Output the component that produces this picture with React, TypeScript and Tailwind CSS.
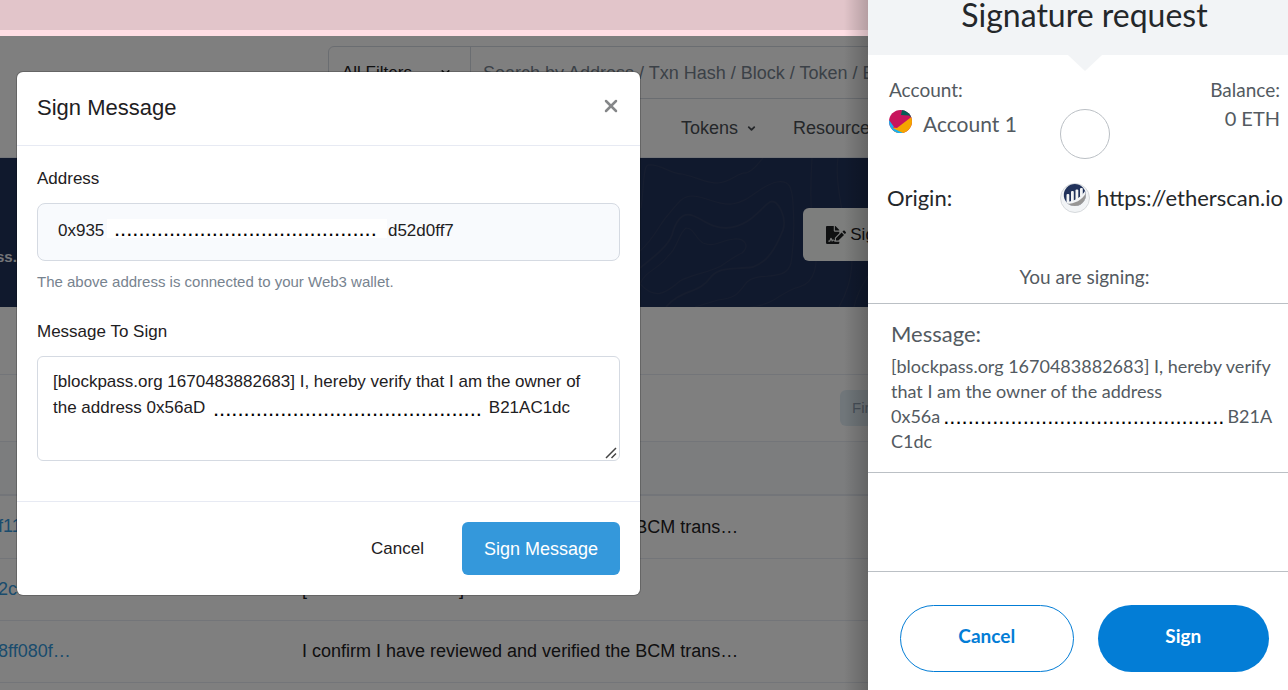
import React from "react";
import { FaFileSignature } from "react-icons/fa";
import { ChevronDown, X } from "lucide-react";

const figureSpaces = (n: number) => "\u2007".repeat(n);
const dots = (n: number) => ".".repeat(n);

const rows = [
  { hash: "f11", message: "I confirm I have reviewed and verified the BCM trans…" },
  { hash: "2c", message: null },
  { hash: "8ff080f…", message: "I confirm I have reviewed and verified the BCM trans…" },
];

function Contours() {
  return (
    <svg
      className="absolute inset-y-0 left-[640px] h-full w-[228px]"
      viewBox="0 0 228 149"
      fill="none"
      stroke="#2c3b5e"
      strokeWidth="1.2"
      aria-hidden="true"
    >
      <path d="M1 50C4 30 3 8 8 7C20 5 30 16 42 16C60 20 65 25 78 25C92 24 98 14 106 15C115 12 118 5 123 0" />
      <path d="M0 93C15 80 20 65 28 57C38 45 42 38 52 38C65 38 78 48 92 46C110 44 120 27 137 24C150 22 152 30 153 45C154 60 155 80 151 105C146 125 118 113 107 124C98 135 97 140 78 142L55 149" />
      <path strokeWidth="1.8" d="M0 110C15 98 28 88 32 77C36 62 42 55 51 57C62 60 70 70 86 70C110 69 120 50 130 44C138 40 147 60 143 72C135 92 127 104 113 109C92 112 80 108 70 120C60 135 40 132 26 149" />
      <path d="M0 126C15 142 25 136 40 123C52 116 68 115 81 108C90 102 95 98 102 95C110 88 105 80 94 81C80 82 76 90 63 85C55 80 54 70 46 70C38 76 38 90 28 98C18 112 6 112 0 126" />
      <path d="M172 0C170 30 171 60 173 82C180 105 175 125 159 129C140 134 135 147 110 149M198 0C195 20 201 45 205 70C215 95 215 120 199 149M228 118C220 130 216 140 214 149" />
    </svg>
  );
}

function ExplorerPage() {
  return (
    <div className="relative flex-1 bg-white text-[17px] leading-[26px] text-[#1e2022]">
      <header className="border-b border-[#e7eaf3]">
        <div className="pt-[10px] pl-[328px]">
          <form className="flex h-[53px] w-[660px] rounded-md border border-[#d5dae2]">
            <button type="button" className="flex w-[142px] items-center justify-between border-r border-[#d5dae2] pr-[18px] pl-[13px]">
              All Filters
              <ChevronDown size={13} strokeWidth={3} />
            </button>
            <input
              aria-label="Search"
              className="flex-1 bg-transparent pl-3 text-[18px] placeholder:text-[#77838f]"
              placeholder="Search by Address / Txn Hash / Block / Token / Ens"
            />
          </form>
        </div>
        <nav className="flex h-[58px] items-center gap-9 pl-[681px] text-[18px] text-[#4a4f55]">
          <a href="#tokens" className="flex items-center gap-2 no-underline">
            Tokens <ChevronDown size={11} strokeWidth={4} />
          </a>
          <a href="#resources">Resources</a>
        </nav>
      </header>

      <section className="relative flex h-[149px] items-center justify-between overflow-hidden bg-[#21325b]">
        <Contours />
        <p className="-ml-1 pt-12 text-[15px] font-bold text-[#e8ebf0]">ss.</p>
        <button
          type="button"
          className="relative -mr-[114px] mt-1 flex h-[53px] items-center gap-1 rounded-md bg-[#fafcfb] pr-6 pl-[23px] whitespace-nowrap"
        >
          <FaFileSignature size={20} />
          Sign Message
        </button>
      </section>

      <div className="h-[68px] border-b border-[#e7eaf3]" />
      <div className="flex h-[67px] items-center justify-end overflow-hidden border-b border-[#e7eaf3]">
        <button type="button" className="-mr-9 h-9 w-16 rounded-md bg-[#e1edf5] pl-3 text-left text-[15px] text-[#8fa1b3]">
          First
        </button>
      </div>
      <div className="h-[54px] border-b-2 border-[#e7eaf3] bg-[#f8fafd]" />
      <table className="w-full border-collapse">
        <tbody>
          {rows.map((r) => (
            <tr key={r.hash} className="h-[62px] border-b border-[#e7eaf3]">
              <td className="w-[302px]">
                <a href="#signature" className="-ml-0.5 text-[18px] text-[#3498db]">
                  {r.hash}
                </a>
              </td>
              <td className="text-[18px]">
                {r.message ?? (
                  <span className="flex w-[162px] justify-between">
                    <span>[</span>
                    <span>]</span>
                  </span>
                )}
              </td>
            </tr>
          ))}
        </tbody>
      </table>
      <div className="absolute inset-0 bg-black/50" />
    </div>
  );
}

function SignDialog() {
  return (
    <div
      role="dialog"
      aria-labelledby="sign-title"
      className="absolute top-[72px] left-[17px] w-[623px] rounded-md bg-white text-[17px] leading-[26px] text-[#1e2022] shadow-[0_0_0_1px_rgba(0,0,0,0.2)]"
    >
      <div className="flex h-[74px] items-center justify-between border-b border-[#e7eaf3] pr-[19px] pb-0.5 pl-5">
        <h2 id="sign-title" className="text-[22px]">Sign Message</h2>
        <button type="button" aria-label="Close" className="pb-1 text-[#858789]">
          <X size={20} strokeWidth={3} />
        </button>
      </div>
      <div className="px-5 pt-5 pb-10">
        <label htmlFor="address" className="mb-[11px] block">Address</label>
        <div className="relative">
          <input
            id="address"
            readOnly
            className="h-[58px] w-full rounded-lg border border-[#d5dae2] bg-[#f8fafd] px-5 pb-[3px]"
            value={"0x935" + figureSpaces(30) + "d52d0ff7"}
          />
          <span className="absolute top-4 left-[70px] h-[19px] w-[280px] overflow-hidden bg-white pl-[7px] text-[22px] leading-[20px] text-black">
            {dots(43)}
          </span>
        </div>
        <p className="mt-[10px] mb-[26px] text-[15px] leading-[22px] text-[#77838f]">
          The above address is connected to your Web3 wallet.
        </p>
        <label htmlFor="message" className="mb-[11px] block">Message To Sign</label>
        <div className="relative">
          <textarea
            id="message"
            className="block h-[105px] w-full resize-none rounded-md border border-[#d5dae2] py-3 pr-3 pl-[15px]"
            defaultValue={
              "[blockpass.org 1670483882683] I, hereby verify that I am the owner of the address 0x56aD" +
              figureSpaces(30) +
              "B21AC1dc"
            }
          />
          <span className="absolute top-11 left-[176px] text-[22px] leading-[18px] text-black">{dots(44)}</span>
          <svg className="absolute right-[3px] bottom-[2px]" width="12" height="12" viewBox="0 0 12 12" stroke="#444" strokeWidth="1.5" aria-hidden="true">
            <path d="M1 11L11 1M6.500 11L11 6.500" />
          </svg>
        </div>
      </div>
      <div className="flex justify-end border-t border-[#e7eaf3] p-5">
        <button type="button" className="h-[53px] px-[38px]">Cancel</button>
        <button type="button" className="h-[53px] rounded-md bg-[#3498db] px-[22px] text-[18px] text-white">
          Sign Message
        </button>
      </div>
    </div>
  );
}

function AccountIcon() {
  return (
    <svg width="23" height="23" viewBox="0 0 23 23" aria-hidden="true">
      <clipPath id="avatar">
        <circle cx="11.5" cy="11.5" r="11.5" />
      </clipPath>
      <g clipPath="url(#avatar)">
        <rect width="23" height="23" fill="#c8145c" />
        <path d="M13 0L23 0L23 8L20 5.500L12 5Z" fill="#035e56" />
        <path d="M23 6.500L8 18L4 17.500L5 23L23 23Z" fill="#f5a500" />
        <path d="M0 10L5 17L3.500 18L14 23L0 23Z" fill="#18b2f2" />
      </g>
    </svg>
  );
}

function EtherscanIcon() {
  return (
    <svg width="30" height="30" viewBox="0 0 30 30" aria-hidden="true">
      <clipPath id="mark">
        <circle cx="14.8" cy="12" r="11" />
      </clipPath>
      <circle cx="15" cy="15" r="14.5" fill="#f2f4f6" stroke="#d6d9dc" />
      <g clipPath="url(#mark)">
        <rect width="30" height="24" fill="#21325b" />
        <path d="M0 19C12 20 22 15 26 6L30 4V24H0Z" fill="#f2f4f6" />
        <path d="M6 21C15 21 22 17 26 10L30 24H6Z" fill="#979695" />
        <g fill="#f2f4f6">
          <rect x="6.500" y="11" width="2.800" height="9" rx="1" />
          <rect x="11" y="8" width="2.800" height="11" rx="1" />
          <rect x="15.500" y="6.500" width="2.800" height="11" rx="1" />
          <rect x="20" y="5" width="2.800" height="9" rx="1" />
        </g>
      </g>
    </svg>
  );
}

function WalletPanel() {
  return (
    <aside className="relative w-[420px] shrink-0 overflow-hidden bg-white font-[Lato,'Liberation_Sans',sans-serif] text-[#535a61]">
      <div className="w-[433px]">
        <header className="relative flex h-[55px] justify-center bg-[#f2f4f6]">
          <h1 className="text-[32px] leading-[30px] text-[#24272a]">Signature request</h1>
          <svg className="absolute top-full" width="34" height="16" viewBox="0 0 34 16" aria-hidden="true">
            <path d="M0 0H34L17 16Z" fill="#f2f4f6" />
          </svg>
        </header>
        <div className="grid grid-cols-[1fr_50px_1fr] px-[21px] pt-[23px]">
          <div>
            <p className="text-[19px] leading-6">Account:</p>
            <div className="mt-2 flex gap-[11px]">
              <AccountIcon />
              <p className="pt-0.5 text-[21px] leading-6">Account 1</p>
            </div>
          </div>
          <div className="mt-[31px] size-[50px] rounded-full border border-[#bbc0c5]" />
          <div className="text-right">
            <p className="text-[19px] leading-6">Balance:</p>
            <p className="mt-1 text-[20px] leading-6">0 ETH</p>
          </div>
        </div>
        <div className="flex items-center justify-between pt-6 pr-[18px] pl-[19px] text-[22px] leading-[30px] text-[#24272a]">
          <span>Origin:</span>
          <span className="flex gap-[7px]">
            <EtherscanIcon />
            https://etherscan.io
          </span>
        </div>
        <p className="pt-[52px] pb-[14px] text-center text-[19px] leading-6">You are signing:</p>
        <div className="h-[170px] border-y border-[#bbc0c5] pt-[18px] pl-[23px]">
          <h2 className="text-[22px] leading-6">Message:</h2>
          <p className="mt-2 text-[18px] leading-[25px] whitespace-nowrap">
            [blockpass.org 1670483882683] I, hereby verify
            <br />
            that I am the owner of the address
          </p>
          <p className="flex gap-[3px] text-[18px] leading-[25px]">
            0x56a
            <span className="font-['Liberation_Sans',sans-serif] text-[22px] text-black">{dots(46)}</span>
            B21A
          </p>
          <p className="text-[18px] leading-[25px]">C1dc</p>
        </div>
        <footer className="mt-[98px] flex gap-6 border-t border-[#bbc0c5] px-8 pt-[33px] text-[19px] font-bold">
          <button type="button" className="h-[67px] flex-1 rounded-full border border-[#037dd6] pb-1 text-[#037dd6]">
            Cancel
          </button>
          <button type="button" className="h-[67px] flex-1 rounded-full bg-[#037dd6] pb-1 text-white">
            Sign
          </button>
        </footer>
      </div>
    </aside>
  );
}

export default function App() {
  return (
    <div className="flex h-screen overflow-hidden font-['Liberation_Sans',Arial,sans-serif]">
      <main className="relative flex min-w-0 flex-1 flex-col overflow-hidden">
        <div className="h-9 shrink-0 border-b-[6px] border-[#ffdee4] bg-[#e2c5ca]" />
        <ExplorerPage />
        <div className="absolute inset-y-0 right-0 w-6 bg-linear-to-r from-transparent to-black/20" />
        <SignDialog />
      </main>
      <WalletPanel />
    </div>
  );
}
